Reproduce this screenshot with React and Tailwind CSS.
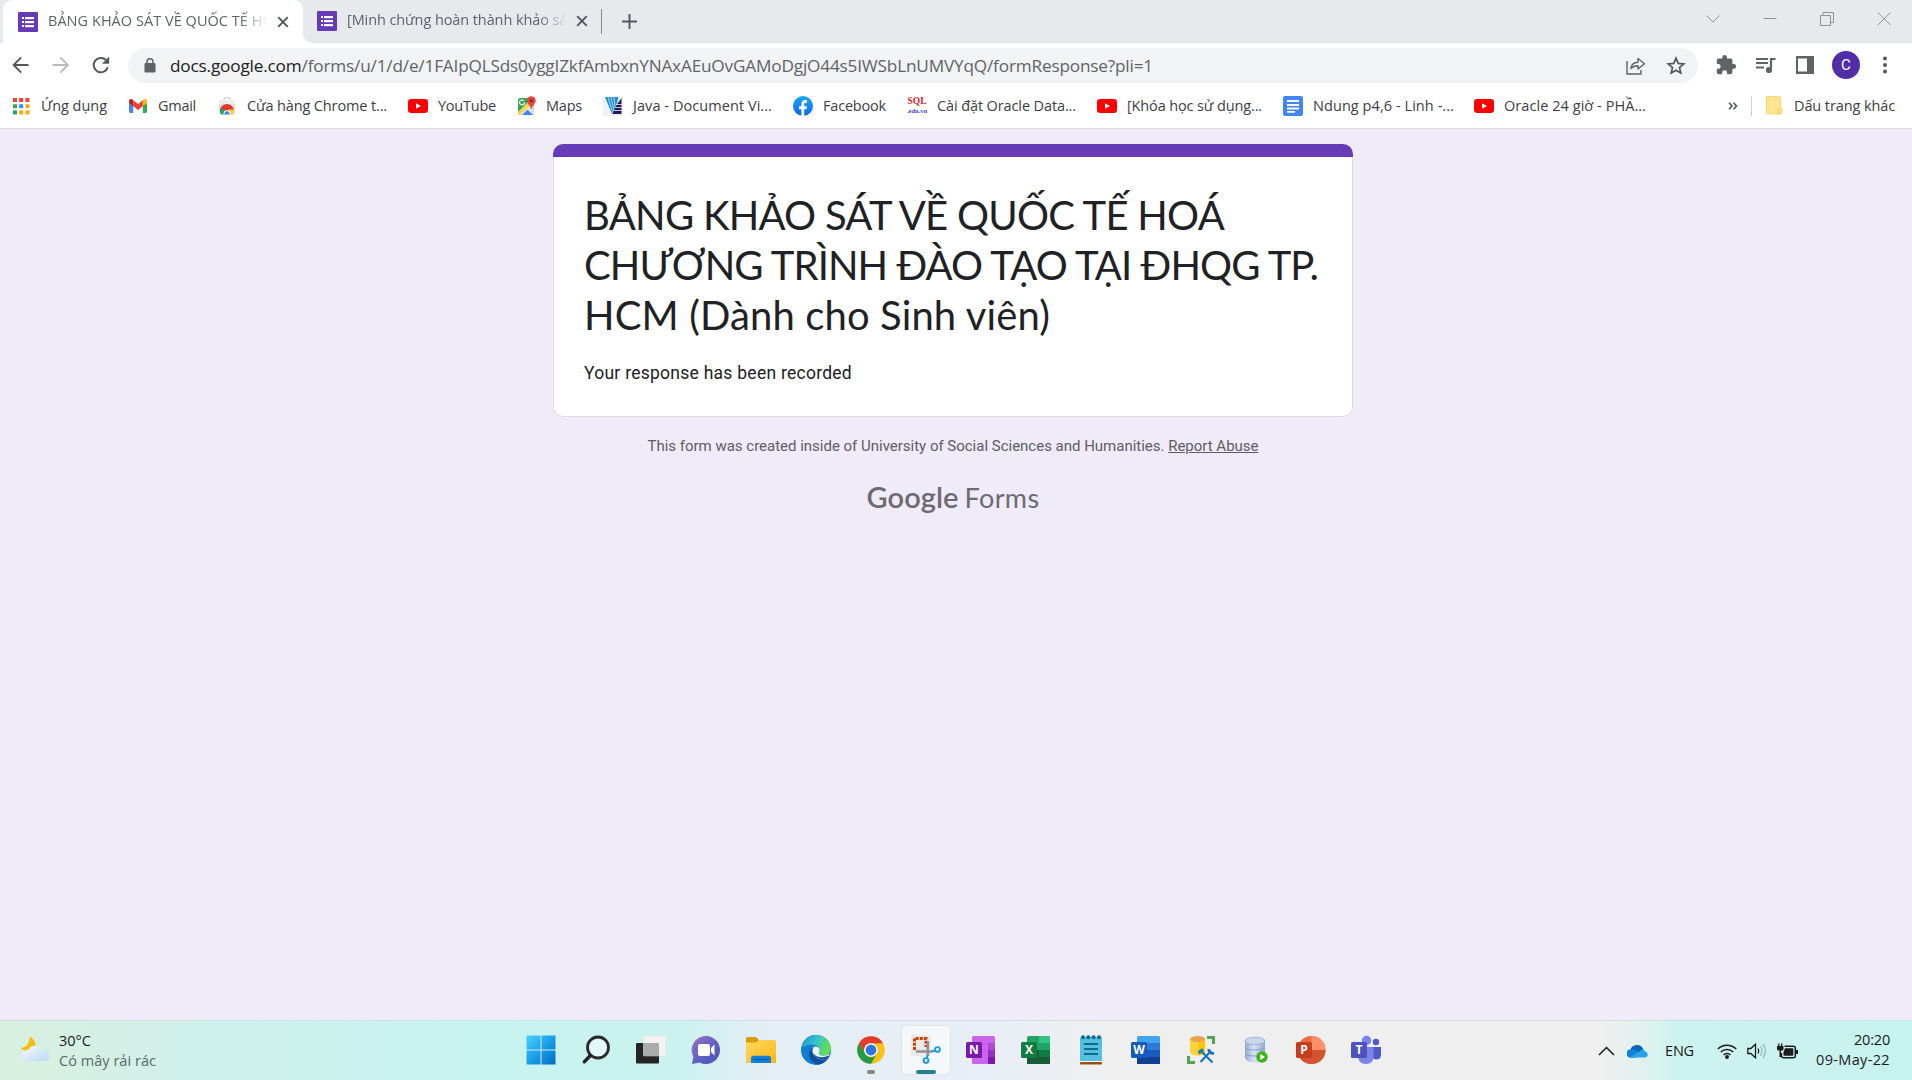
import React, { useLayoutEffect, useRef, useState } from "react";

/* Single line of text whose letter spacing is adjusted to fill a given width. */
function Fit({ w, children, className = "" }) {
  const ref = useRef(null);
  const [ls, setLs] = useState(0);
  useLayoutEffect(() => {
    const natural = ref.current.getBoundingClientRect().width;
    const n = ref.current.textContent.length;
    setLs((w - natural) / n);
  }, [w]);
  return (
    <span
      ref={ref}
      className={"inline-block whitespace-pre " + className}
      style={{ letterSpacing: ls + "px" }}
    >
      {children}
    </span>
  );
}

const ui = "font-['Open_Sans','Noto_Sans',sans-serif]";

/* ---------- small drawings ---------- */

const FormsIcon = () => (
  <svg width="20" height="20" viewBox="0 0 20 20" className="shrink-0">
    <rect width="20" height="20" rx="1" fill="#673ab7" />
    <g fill="#fff">
      <rect x="4" y="5" width="2" height="2" />
      <rect x="7" y="5" width="9" height="2.2" />
      <rect x="4" y="9" width="2" height="2" />
      <rect x="7" y="9" width="9" height="2.2" />
      <rect x="4" y="13" width="2" height="2" />
      <rect x="7" y="13" width="9" height="2.2" />
    </g>
  </svg>
);

const CloseX = () => (
  <svg width="12" height="12" viewBox="0 0 12 12" className="shrink-0">
    <path d="M1.2 1.2l9.6 9.6M10.8 1.2l-9.6 9.6" stroke="#54585c" strokeWidth="1.9" />
  </svg>
);

const AppsIcon = () => (
  <svg width="18" height="18" viewBox="0 0 18 18">
    {[
      "#ea4335", "#ea4335", "#ea4335",
      "#34a853", "#2a93f5", "#fbab00",
      "#22a464", "#fbab00", "#fbab00",
    ].map((c, i) => (
      <rect key={i} x={1 + (i % 3) * 6.2} y={1 + Math.floor(i / 3) * 6.2} width="4" height="4" fill={c} />
    ))}
  </svg>
);

const GmailIcon = () => (
  <svg width="18" height="14" viewBox="0 0 18 14">
    <path d="M0 2.2V12.6Q0 14 1.3 14H4.2V5z" fill="#4285f4" />
    <path d="M18 2.2V12.6Q18 14 16.700 14H13.800V5z" fill="#34a853" />
    <path d="M13.800 1.300V7.300L18 4.100V2.100C18 .2 15.900-.6 14.600.5z" fill="#fbbc04" />
    <path d="M4.200 7.300V1.300L9 4.900l4.800-3.600v6L9 10.900z" fill="#ea4335" />
    <path d="M0 2.100v2L4.200 7.300v-6L3.400.5C2.100-.6 0 .2 0 2.100z" fill="#c5221f" />
  </svg>
);

const StoreIcon = () => (
  <svg width="16" height="18" viewBox="0 0 16 18">
    <path d="M5 3V1.500Q5 .8 5.700.8h4.600Q11 .8 11 1.500V3" fill="none" stroke="#cfd2d5" strokeWidth="1.300" />
    <path d="M0 3h16v6H0z" fill="#eceef0" />
    <path d="M0 7h16v9q0 1.500-1.500 1.500h-13Q0 17.500 0 16z" fill="#dfe2e5" />
    <path d="M1 13.500a7 6.500 0 0 1 14 0l-7 .5z" fill="#e0392b" />
    <path d="M1.200 11.500Q.2 15 2.200 17.500H7L3.800 12z" fill="#1da261" />
    <path d="M9 12.500h5.900q.6 2.600-1.100 5H8z" fill="#ffce43" />
    <path d="M4.600 17.500a3.500 3.500 0 1 1 6.800 0z" fill="#fff" />
    <path d="M5.500 17.500a2.600 2.600 0 1 1 5 0z" fill="#3f86f5" />
  </svg>
);

const YouTubeIcon = () => (
  <svg width="20" height="14" viewBox="0 0 20 14">
    <rect width="20" height="14" rx="3.200" fill="#f00" />
    <path d="M8 4.200v5.600L13 7z" fill="#fff" />
  </svg>
);

const MapsIcon = () => (
  <svg width="20" height="20" viewBox="0 0 20 20">
    <rect x="2" y="2" width="16" height="17" rx="2" fill="#35a55a" />
    <path d="M2 18L17.500 3.500 18 17q0 2-2 2H4q-1.500 0-2-1z" fill="#dfe3e6" />
    <path d="M2 16L15 3l3 2L4 19q-2 0-2-2z" fill="#fdd34d" />
    <path d="M6 19l5.500-5.300L17 19z" fill="#4285f4" />
    <path d="M8.500 6.200a2.500 2.500 0 1 1-.8-1.600" fill="none" stroke="#fff" strokeWidth="1.200" />
    <path d="M15.300.2a4.400 4.400 0 0 0-4.400 4.400c0 3.300 3.300 4.300 4.400 9.200 1.100-4.900 4.400-5.900 4.400-9.200A4.400 4.400 0 0 0 15.300.2z" fill="#e5443a" />
    <circle cx="15.300" cy="4.700" r="1.600" fill="#8c2a22" />
  </svg>
);

const JavaDocIcon = () => (
  <svg width="20" height="20" viewBox="0 0 20 20">
    <rect width="20" height="20" fill="#f1f1f4" />
    <path d="M2 1h13.500L11 18H9z" fill="#1c8fce" />
    <path d="M5 1l5 17M8 1l3 14M11 1l1 10" stroke="#e9f5fb" strokeWidth=".7" />
    <path d="M18.500 2v16H9.500l4-9z" fill="#241a5c" />
    <path d="M13 8.500h6M12 11.500H19M11 14.500h8" stroke="#f1f1f4" strokeWidth=".8" />
  </svg>
);

const FacebookIcon = () => (
  <svg width="20" height="20" viewBox="0 0 20 20">
    <defs>
      <linearGradient id="fb" x1="0" y1="0" x2="0" y2="1">
        <stop offset="0" stopColor="#1aa9fb" />
        <stop offset="1" stopColor="#0866e4" />
      </linearGradient>
    </defs>
    <circle cx="10" cy="10" r="10" fill="url(#fb)" />
    <path d="M8.400 20v-6.800H6v-3h2.400V8c0-2.500 1.500-3.900 3.700-3.900.8 0 1.600.1 1.900.2v2.600h-1.300c-1.200 0-1.500.7-1.500 1.500v1.800H14l-.5 3h-2.300V20z" fill="#fff" />
  </svg>
);

const SqlIcon = () => (
  <span className="flex w-5 flex-col items-center font-['Liberation_Serif',serif] font-bold">
    <span className="text-[9.5px] leading-[10px] text-[#e0212b]">SQL</span>
    <span className="text-[6.500px] leading-[9px] text-[#4a47c9]">.edu.vn</span>
  </span>
);

const DocsIcon = () => (
  <svg width="20" height="20" viewBox="0 0 20 20">
    <rect width="20" height="20" rx="2" fill="#4285f4" />
    <path d="M4 5h12M4 9h12M4 12.500h12M4 15.800h8" stroke="#fff" strokeWidth="1.800" />
  </svg>
);

const Toolbar = {
  Back: () => (
    <svg width="18" height="18" viewBox="0 0 18 18">
      <path d="M16.500 9H2M9.200 1.300L1.600 9l7.600 7.700" fill="none" stroke="#54585c" strokeWidth="1.900" />
    </svg>
  ),
  Forward: () => (
    <svg width="18" height="18" viewBox="0 0 18 18">
      <path d="M.5 9h15M8.300 1.300L15.900 9l-7.600 7.700" fill="none" stroke="#b9bbbe" strokeWidth="1.900" />
    </svg>
  ),
  Reload: () => (
    <svg width="18" height="18" viewBox="0 0 18 18">
      <path d="M15.800 11.200A7.200 7.200 0 1 1 14 4" fill="none" stroke="#54585c" strokeWidth="2" />
      <path d="M17.200 .5v7.200H10z" fill="#54585c" />
    </svg>
  ),
  Lock: () => (
    <svg width="12" height="15" viewBox="0 0 12 15">
      <rect x=".5" y="5" width="11" height="9.500" rx="1.200" fill="#5f6368" />
      <path d="M3 6V3.800a3 3 0 0 1 6 0V6" fill="none" stroke="#5f6368" strokeWidth="1.500" />
    </svg>
  ),
  Share: () => (
    <svg width="20" height="18" viewBox="0 0 20 18" fill="none" stroke="#5f6368" strokeWidth="1.400">
      <path d="M1 4v13h14v-4" />
      <path d="M4.800 11.500c.6-3.800 3.200-6 7.200-6.200V1.500L18.500 6.700 12 12V8.700c-3.200 0-5.400.8-7.200 2.800z" strokeLinejoin="round" />
    </svg>
  ),
  Star: () => (
    <svg width="20" height="19" viewBox="0 0 20 19">
      <path d="M10 2.200l2.200 5.200 5.600.5-4.300 3.700 1.300 5.500L10 14.200l-4.800 2.900 1.300-5.500L2.200 7.900l5.600-.5z" fill="none" stroke="#54585c" strokeWidth="1.700" />
    </svg>
  ),
  Puzzle: () => (
    <svg width="22" height="22" viewBox="0 0 24 24">
      <path d="M20.500 11H19V7c0-1.100-.9-2-2-2h-4V3.500a2.500 2.500 0 0 0-5 0V5H4c-1.100 0-2 .9-2 2v3.800h1.500a2.700 2.700 0 0 1 0 5.400H2V20c0 1.100.9 2 2 2h3.800v-1.500a2.700 2.700 0 0 1 5.400 0V22H17c1.100 0 2-.9 2-2v-4h1.500a2.500 2.500 0 0 0 0-5z" fill="#5f6368" />
    </svg>
  ),
  Queue: () => (
    <svg width="20" height="17" viewBox="0 0 20 17">
      <path d="M0 2h12M0 6h12M0 10.500h8" stroke="#5f6368" strokeWidth="1.900" />
      <path d="M15 12.500V2h4.500" fill="none" stroke="#5f6368" strokeWidth="2.200" />
      <circle cx="13" cy="13" r="3.100" fill="#5f6368" />
    </svg>
  ),
  Panel: () => (
    <svg width="18" height="18" viewBox="0 0 18 18">
      <path d="M0 0h18v18H0zM2 2.500v13h9v-13z" fillRule="evenodd" fill="#5f6368" />
    </svg>
  ),
};

/* ---------- browser chrome ---------- */

const Tab = ({ title, w, active }) => (
  <div className={"flex h-full items-center " + (active ? "w-[300px] rounded-t-[9px] bg-white pl-[15px]" : "w-[289px] pl-[5px]")}>
    <FormsIcon />
    <div className="ml-[10px] w-[219px] overflow-hidden [mask-image:linear-gradient(to_right,black_192px,transparent_219px)]">
      <Fit w={w} className="align-top text-[14.500px] text-[#5f6368]">{title}</Fit>
    </div>
    <div className="ml-[10px]">
      <CloseX />
    </div>
  </div>
);

const TabStrip = () => (
  <div className="flex h-[43px] bg-[#e6eaed] pl-[3px]">
    <Tab title="BẢNG KHẢO SÁT VỀ QUỐC TẾ HOÁ" w={235} active />
    <div className="h-full w-[9px] bg-white">
      <div className="h-full rounded-bl-[9px] bg-[#e6eaed]" />
    </div>
    <div className="h-[42px]">
      <Tab title="[Minh chứng hoàn thành khảo sát]" w={230} />
    </div>
    <div className="mt-[9px] h-[25px] w-px bg-[#888c90]" />
    <svg width="15" height="15" viewBox="0 0 15 15" className="ml-[20px] mt-[14px]">
      <path d="M7.500 0v15M0 7.500h15" stroke="#54585c" strokeWidth="1.900" />
    </svg>
    <div className="ml-auto flex gap-[43px] pr-[21px] pt-[12px]">
      {[
        "M.5 3.500l6.500 6.500 6.500-6.500",
        "M.5 6.500h13",
        "M.5 3.500h10v10h-10zM3 3V.5h10.500v10H11",
        "M1 .5l12.500 12.500M13.500 .5L1 13",
      ].map((d, i) => (
        <svg key={i} width="14" height="14" viewBox="0 0 14 14">
          <path d={d} fill="none" stroke="#909396" strokeWidth="1" />
        </svg>
      ))}
    </div>
  </div>
);

const AddressRow = () => (
  <div className="flex h-[44px] items-center bg-white pl-[12px]">
    <Toolbar.Back />
    <div className="ml-[22px]"><Toolbar.Forward /></div>
    <div className="ml-[22px]"><Toolbar.Reload /></div>
    <div className={"ml-[18px] flex h-[35px] w-[1570px] items-center rounded-full bg-[#f1f3f4] pl-[16px] pt-[1px] text-[17.200px] leading-[34px] text-[#5f6368] " + ui}>
      <Toolbar.Lock />
      <Fit w={983} className="ml-[14px]"><span className="text-[#202124]">docs.google.com</span>/forms/u/1/d/e/1FAIpQLSds0yggIZkfAmbxnYNAxAEuOvGAMoDgjO44s5IWSbLnUMVYqQ/formResponse?pli=1</Fit>
      <div className="ml-auto flex items-center gap-[20px] pr-[12px]">
        <Toolbar.Share />
        <Toolbar.Star />
      </div>
    </div>
    <div className="ml-[17px]"><Toolbar.Puzzle /></div>
    <div className="ml-[19px]"><Toolbar.Queue /></div>
    <div className="ml-[20px]"><Toolbar.Panel /></div>
    <div className="ml-[18px] flex h-7 w-7 items-center justify-center rounded-full bg-[#512da8] font-[Roboto,sans-serif] text-[15px] text-white">C</div>
    <svg width="6" height="18" viewBox="0 0 6 18" className="ml-[22px]">
      <circle cx="3" cy="2.500" r="2" fill="#54585c" />
      <circle cx="3" cy="9" r="2" fill="#54585c" />
      <circle cx="3" cy="15.500" r="2" fill="#54585c" />
    </svg>
  </div>
);

const bookmarks = [
  [AppsIcon, "Ứng dụng", 117, 66],
  [GmailIcon, "Gmail", 89, 38],
  [StoreIcon, "Cửa hàng Chrome t...", 191, 140],
  [YouTubeIcon, "YouTube", 108, 58],
  [MapsIcon, "Maps", 87, 36],
  [JavaDocIcon, "Java - Document Vi...", 190, 139],
  [FacebookIcon, "Facebook", 114, 63],
  [SqlIcon, "Cài đặt Oracle Data...", 190, 139],
  [YouTubeIcon, "[Khóa học sử dụng...", 186, 135],
  [DocsIcon, "Ndung p4,6 - Linh -...", 191, 141],
  [YouTubeIcon, "Oracle 24 giờ - PHẦ...", 250, 142],
];

const BookmarksBar = () => (
  <div className={"flex h-[42px] items-center border-b border-[#dadce0] bg-white pb-[4px] pl-[11px] text-[14.500px] text-[#3c4043] " + ui}>
    {bookmarks.map(([Icon, label, slot, w], i) => (
      <div key={i} className="flex shrink-0 items-center" style={{ width: slot }}>
        <span className="flex w-5 shrink-0 justify-center"><Icon /></span>
        <Fit w={w} className="ml-[10px]">{label}</Fit>
      </div>
    ))}
    <svg width="10" height="8" viewBox="0 0 10 8" className="ml-[4px]">
      <path d="M1 .7L4 4 1 7.300M5.500 .7L8.500 4l-3 3.300" fill="none" stroke="#54585c" strokeWidth="1.700" />
    </svg>
    <div className="ml-[13px] h-5 w-px bg-[#cbcdd0]" />
    <svg width="17" height="19" viewBox="0 0 17 19" className="ml-[14px]">
      <rect x=".5" y=".5" width="14" height="17.500" rx="1.500" fill="#ffe591" stroke="#fbd766" />
      <path d="M12 18v-4.500q0-1.500 1.500-1.500h1q1.500 0 1.500 1.500V16q0 2-2 2z" fill="#ffe07c" stroke="#f4cb52" strokeWidth=".8" />
    </svg>
    <Fit w={101} className="ml-[11px]">Dấu trang khác</Fit>
  </div>
);

/* ---------- form page ---------- */

const FormPage = () => (
  <main className="flex h-[891px] flex-col items-center bg-[#f0ebf8] pr-[6px] pt-[15px]">
    <section className="flex h-[273px] w-[800px] flex-col overflow-hidden rounded-[10px]">
      <div className="h-[13px] shrink-0 bg-[#673ab7]" />
      <div className="grow rounded-b-[10px] border border-t-0 border-[#dadce0] bg-white pl-[30px] pt-[33px]">
        <h1 className="flex flex-col items-start font-[Lato,sans-serif] text-[40px] leading-[50px] text-[#202124]">
          <Fit w={640}>BẢNG KHẢO SÁT VỀ QUỐC TẾ HOÁ</Fit>
          <Fit w={734}>CHƯƠNG TRÌNH ĐÀO TẠO TẠI ĐHQG TP.</Fit>
          <Fit w={466}>HCM (Dành cho Sinh viên)</Fit>
        </h1>
        <p className="mt-[21px] font-[Roboto,sans-serif] text-[17.500px] leading-[25px] text-[#202124]">
          <Fit w={268}>Your response has been recorded</Fit>
        </p>
      </div>
    </section>
    <p className="mt-[17px] font-[Roboto,sans-serif] text-[15px] leading-[24px] text-[#5f5c63]">
      <Fit w={611}>This form was created inside of University of Social Sciences and Humanities. <span className="underline">Report Abuse</span></Fit>
    </p>
    <div className="mt-[19px] flex gap-[6px] text-[#6d6a71]">
      <Fit w={92} className="font-[Lato,sans-serif] text-[29px] leading-[40px] font-semibold">Google</Fit>
      <Fit w={75} className="font-[Lato,sans-serif] text-[27px] leading-[41px]">Forms</Fit>
    </div>
  </main>
);

/* ---------- taskbar ---------- */

const Office = ({ letter, dark, children }) => (
  <svg width="30" height="30" viewBox="0 0 30 30">
    {children}
    <rect y="7" width="16" height="16" rx="1.500" fill={dark} />
    <text x="8" y="19.300" textAnchor="middle" fill="#fff" fontSize="12" fontWeight="700" fontFamily="Open Sans, sans-serif">{letter}</text>
  </svg>
);

const taskIcons = [
  () => (
    <svg width="30" height="30" viewBox="0 0 30 30">
      <defs>
        <linearGradient id="win" x1="0" y1="0" x2="1" y2="1">
          <stop offset="0" stopColor="#4fd0ff" />
          <stop offset=".5" stopColor="#1a9fe8" />
          <stop offset="1" stopColor="#0469c8" />
        </linearGradient>
      </defs>
      <path d="M.5 .5h14v14H.5zM15.500 .5h14v14h-14zM.5 15.500h14v14H.5zM15.500 15.500h14v14h-14z" fill="url(#win)" />
    </svg>
  ),
  () => (
    <svg width="30" height="30" viewBox="0 0 30 30">
      <circle cx="17" cy="12.500" r="10.500" fill="#f5fcfc" fillOpacity=".6" stroke="#2a2a2c" strokeWidth="2.800" />
      <path d="M9.300 20.500L3.300 26.800" stroke="#222" strokeWidth="3.400" strokeLinecap="round" />
    </svg>
  ),
  () => (
    <svg width="30" height="30" viewBox="0 0 30 30">
      <rect x="0" y="8" width="23" height="20.500" rx="1" fill="#252525" />
      <rect x="7.500" y="1" width="22.500" height="20" rx="1" fill="#f2f2f2" stroke="#dcdcdc" strokeWidth=".5" />
      <rect x="7.500" y="8" width="15.500" height="13" fill="#aaabab" />
    </svg>
  ),
  () => (
    <svg width="30" height="30" viewBox="0 0 30 30">
      <defs>
        <linearGradient id="chat" x1="0" y1="0" x2="1" y2="1">
          <stop offset="0" stopColor="#9b71b8" />
          <stop offset=".6" stopColor="#5b5fc7" />
          <stop offset="1" stopColor="#4f52b2" />
        </linearGradient>
      </defs>
      <path d="M15 1a14 14 0 1 1-6.500 26.400L1 29l1.300-7.400A14 14 0 0 1 15 1z" fill="url(#chat)" />
      <rect x="7" y="9" width="12" height="12" rx="2" fill="#fff" />
      <path d="M20 13l3.500-3.500v11L20 17z" fill="#fff" />
    </svg>
  ),
  () => (
    <svg width="30" height="30" viewBox="0 0 30 30">
      <defs>
        <linearGradient id="fold" x1="0" y1="0" x2="1" y2="1">
          <stop offset="0" stopColor="#ffd869" />
          <stop offset="1" stopColor="#f9b90f" />
        </linearGradient>
      </defs>
      <path d="M0 3.500Q0 2 1.500 2H9q1.500 0 2.500 1.500L13 5v6H0z" fill="#dd9b08" />
      <path d="M0 7.500h10.500L13 5h15.500Q30 5 30 6.500V28H0z" fill="url(#fold)" />
      <path d="M5 28v-5q0-2.300 2.300-2.300h15.400q2.300 0 2.300 2.300v5z" fill="#1180d5" />
      <path d="M8.500 24.500h13" stroke="#0b5ba6" strokeWidth="1.300" />
    </svg>
  ),
  () => (
    <svg width="30" height="30" viewBox="0 0 30 30">
      <defs>
        <linearGradient id="edgeTop" x1="0" y1="0" x2="1" y2=".4">
          <stop offset="0" stopColor="#1c8fd8" />
          <stop offset=".5" stopColor="#35c1d0" />
          <stop offset="1" stopColor="#62df54" />
        </linearGradient>
      </defs>
      <circle cx="15" cy="15" r="15" fill="#0f7ed3" />
      <path d="M.3 13C1.500 4.500 8 0 15 0c9 0 15 6.500 15 13 0 5-3.500 7.700-7.500 7.700-3.500 0-5-1.200-4.800-2.300.1-.7 1-1.200 1-3.100 0-3-3-5.800-7.500-5.800C6 9.500 1.500 12 .3 13z" fill="url(#edgeTop)" />
      <path d="M12 12.500c-3.600 2.500-4.600 6-3.500 9.500 1.300 4.200 5 7 9 7.700 4.500-1 8-3.700 10-7-2.500 1.500-5 1.900-7.500 1.500-5-.8-8.500-4.500-8.500-8 0-1.400.2-2.600.5-3.700z" fill="#12509b" />
      <path d="M12.200 12.400c1.700-1.700 6.500-.6 6.500 2.900 0 1.900-.9 2.400-1 3.100-.2 1.200 1.300 2.300 4.800 2.300 2.300 0 4-.6 5.200-1.600l1.200 1-1.400 2.600c-2.500 1.500-5 1.900-7.500 1.500-5-.8-8.500-4.500-8.500-8 0-1.400.2-2.600.7-3.800z" fill="#eaf1f7" />
      <path d="M28.900 20.100l-1.400 2.600c-2.500 1.500-5 1.900-7.500 1.500-4-.7-7.300-3.400-8.200-6.200 2.200 3 6.200 4.600 10.200 4.200 3-.3 5-1 6.900-2.100z" fill="#12509b" />
    </svg>
  ),
  () => (
    <svg width="28" height="28" viewBox="0 0 28 28">
      <circle cx="14" cy="14" r="13.800" fill="#fbc116" />
      <path d="M2 7.200A13.800 13.800 0 0 1 26 7.200H14a6.800 6.800 0 0 0-6 10.200z" fill="#e33b2e" />
      <path d="M2 7.200a13.800 13.800 0 0 0 12 20.600l6-10.400a6.800 6.800 0 0 1-12 0z" fill="#219a4b" />
      <circle cx="14" cy="14" r="6.800" fill="#fff" />
      <circle cx="14" cy="14" r="5.400" fill="#2b76ea" />
    </svg>
  ),
  () => (
    <svg width="30" height="30" viewBox="0 0 30 30">
      <rect width="21" height="21" rx="2" fill="#e9e9ea" x="-1" y="0" />
      <path d="M3.500 15V3.500H15V12" fill="none" stroke="#d83b01" strokeWidth="3" strokeDasharray="3 1.200" />
      <path d="M16.800 6v15M5 16.500h16" stroke="#8b9197" strokeWidth="2.600" />
      <circle cx="15" cy="25.500" r="2.400" fill="none" stroke="#1a9be6" strokeWidth="1.900" />
      <circle cx="26.500" cy="14.500" r="2.400" fill="none" stroke="#1a9be6" strokeWidth="1.900" />
      <path d="M20.500 16.500l4-1M16.500 20.500l-1 3" stroke="#1a9be6" strokeWidth="2" />
    </svg>
  ),
  () => (
    <Office letter="N" dark="#7719aa">
      <rect x="6" y="1" width="23" height="28" rx="1.500" fill="#ca64ea" />
      <path d="M22 8h7v7h-7z" fill="#ae4bd5" />
      <path d="M22 15h7v7h-7z" fill="#9332bf" />
      <path d="M22 22h7v7h-7z" fill="#7719aa" />
    </Office>
  ),
  () => (
    <Office letter="X" dark="#107c41">
      <rect x="6" y="1" width="23" height="28" rx="1.500" fill="#21a366" />
      <path d="M18 1h11v7H18z" fill="#33c481" />
      <path d="M6 15h12v7H6z" fill="#185c37" />
      <path d="M18 15h11v7H18z" fill="#107c41" />
      <path d="M6 22h23v7H6z" fill="#185c37" />
    </Office>
  ),
  () => (
    <svg width="24" height="30" viewBox="0 0 24 30">
      <rect x="1" y="2" width="22" height="25" rx="1.500" fill="#56bfdd" />
      <rect x="1" y="27" width="22" height="2.500" rx="1" fill="#9a4e10" />
      <path d="M1 26.500h22" stroke="#fff" strokeWidth="1" />
      {[4, 9.300, 14.600, 20].map((x) => <circle key={x} cx={x} cy="2.200" r="2" fill="#0c6a8e" />)}
      <path d="M5 9h14M5 14h14M5 19h14" stroke="#0c6a8e" strokeWidth="2" />
    </svg>
  ),
  () => (
    <Office letter="W" dark="#185abd">
      <rect x="6" y="1" width="23" height="28" rx="1.500" fill="#41a5ee" />
      <path d="M6 8h23v7H6z" fill="#2b7cd3" />
      <path d="M6 15h23v7H6z" fill="#185abd" />
      <path d="M6 22h23v7H6z" fill="#103f91" />
    </Office>
  ),
  () => (
    <svg width="30" height="30" viewBox="0 0 30 30">
      <path d="M4 3.500v14q2 3 7.500 3t7.500-3v-14z" fill="#fdd33b" />
      <path d="M12 3.500v17q5 0 7-3v-14z" fill="#fbc800" />
      <ellipse cx="11.500" cy="4" rx="7.500" ry="3" fill="#eaa24b" />
      <path d="M21 2.500h6.500V9M2.500 21v6.500H9" fill="none" stroke="#54a350" strokeWidth="3" />
      <path d="M14.500 27L25 16M16 17l10.500 10.500" stroke="#1677c5" strokeWidth="2.200" />
      <path d="M12.500 18l4.500-3.500M23 14q-1 4 5 4.500" fill="none" stroke="#1677c5" strokeWidth="3" />
    </svg>
  ),
  () => (
    <svg width="24" height="28" viewBox="0 0 24 28">
      <defs>
        <linearGradient id="cyl" x1="0" y1="0" x2="1" y2="0">
          <stop offset="0" stopColor="#90a9cf" />
          <stop offset=".45" stopColor="#d8e4f4" />
          <stop offset="1" stopColor="#8da8cf" />
        </linearGradient>
      </defs>
      <path d="M1 5v17q2 4.500 10 4.500T21 22V5z" fill="url(#cyl)" />
      <path d="M1 11q2 3 10 3t10-3M1 17q2 3 10 3t10-3" fill="none" stroke="#84a0c8" />
      <ellipse cx="11" cy="5" rx="10" ry="3.800" fill="#c8d6ea" stroke="#91a9cd" strokeWidth=".8" />
      <circle cx="18" cy="21" r="5.700" fill="#3cb31b" />
      <path d="M16.300 18v6l4.700-3z" fill="#fff" />
    </svg>
  ),
  () => (
    <Office letter="P" dark="#c43e1c">
      <circle cx="15.500" cy="15" r="14" fill="#ed6c47" />
      <path d="M15.500 1a14 14 0 0 1 14 14h-14z" fill="#ff8f6b" />
      <path d="M1.500 15h28a14 14 0 0 1-28 0z" fill="#d35230" />
    </Office>
  ),
  () => (
    <Office letter="T" dark="#4b53bc">
      <circle cx="25" cy="7" r="3.200" fill="#5059c9" />
      <path d="M19 12h11v8q0 4.500-5.500 4.500L19 22z" fill="#5059c9" />
      <circle cx="15.500" cy="5.500" r="4.700" fill="#7b83eb" />
      <path d="M7 12h15.500v9q0 8-7.500 8t-8-8z" fill="#7b83eb" />
    </Office>
  ),
];

const SunCloud = () => (
  <svg width="30" height="28" viewBox="0 0 30 28" className="shrink-0">
    <defs>
      <linearGradient id="cloud" x1="0" y1="0" x2="1" y2="1">
        <stop offset="0" stopColor="#f5f9fd" />
        <stop offset="1" stopColor="#b9d9f5" />
      </linearGradient>
    </defs>
    <path d="M10.800 1.500c5.500 3.500 6.700 8 4.700 11.500-2.500 4.300-9 5-14-.2 5 .5 9.300-4.300 9.300-11.300z" fill="#fbbb0c" />
    <path d="M8.500 26a5.500 5.500 0 1 1 .5-11 7.500 7.500 0 0 1 13.500 0 5.800 5.800 0 1 1 2 11z" fill="url(#cloud)" />
  </svg>
);

const Taskbar = () => (
  <footer className={"flex h-[60px] border-t border-[#cfe0e2] bg-[linear-gradient(90deg,#d8f0e0_0px,#cff0ec_220px,#c7f3ef_480px,#cbf2ef_680px,#e5eef4_770px,#e7eef7_960px,#efefef_1120px,#efefef_1600px,#e0f1ee_1645px,#cdf3f1_1675px,#cbf1ef_1800px,#c5f3ee_1912px)] " + ui}>
    <div className="flex w-[513px] pl-[19px] pt-[14px]">
      <SunCloud />
      <div className="-mt-[4px] ml-[10px] flex flex-col items-start text-[14.500px] leading-[20px]">
        <Fit w={32} className="text-[#1b1b1b]">30°C</Fit>
        <Fit w={97} className="text-[#5a6867]">Có mây rải rác</Fit>
      </div>
    </div>
    <div className="flex">
      {taskIcons.map((Icon, i) => (
        <div key={i} className="flex w-[55px] flex-col items-center pt-[5px]">
          <div className={"flex h-[48px] w-[48px] flex-col items-center rounded-[5px] pt-[9px] " + (i === 7 ? "bg-[#f5f8fa] shadow-[0_0_1px_1px_#e0e5ea]" : "")}>
            <div className="flex h-[30px] items-center"><Icon /></div>
            {i === 6 && <div className="mt-[5px] h-[4px] w-[8px] rounded-full bg-[#868686]" />}
            {i === 7 && <div className="mt-[5px] h-[4px] w-[20px] rounded-full bg-[#24808f]" />}
          </div>
        </div>
      ))}
    </div>
    <div className="ml-auto flex items-center pr-[22px] text-[14.500px] text-[#1b1b1b]">
      <svg width="17" height="10" viewBox="0 0 17 10">
        <path d="M1 9l7.500-7.500L16 9" fill="none" stroke="#1b1b1b" strokeWidth="1.500" />
      </svg>
      <svg width="21" height="14" viewBox="0 0 21 14" className="ml-[12px]">
        <path d="M4 13.500a4 4 0 0 1-.5-8A7 7 0 0 1 16 4.500l1 4-8 5z" fill="#0a65bd" />
        <path d="M3.500 5.500a5 5 0 0 1 5 .5l8 4-11 3.500H4a4 4 0 0 1-.5-8z" fill="#1283d8" />
        <path d="M3 13l9.500-5.500Q15 4.500 18 7q2.700 1 2.700 3.500 0 3-3.200 3H4z" fill="#28a3ea" />
      </svg>
      <Fit w={29} className="ml-[17px]">ENG</Fit>
      <svg width="20" height="16" viewBox="0 0 20 16" className="ml-[23px]" fill="none" stroke="#1b1b1b" strokeWidth="1.500">
        <path d="M.8 6a13 13 0 0 1 18.400 0M3.800 9a8.800 8.800 0 0 1 12.400 0M6.600 11.900a4.800 4.800 0 0 1 6.800 0" />
        <circle cx="10" cy="14" r="1.200" fill="#1b1b1b" />
      </svg>
      <svg width="20" height="16" viewBox="0 0 20 16" className="ml-[10px]" fill="none" stroke="#1b1b1b" strokeWidth="1.300">
        <path d="M.8 5.500h3L8.500 1.200v13.600L3.800 10.500h-3z" />
        <path d="M11 5.500q1.600 2.500 0 5" />
        <path d="M13.500 3.200q3 4.800 0 9.600M16 1q5 7 0 14" stroke="#9cbcbb" />
      </svg>
      <svg width="21" height="16" viewBox="0 0 21 16" className="ml-[10px]">
        <path d="M7.500 3.300h8.800q2 0 2 2v7.400q0 2-2 2H6.500q-2 0-2-2V10" fill="none" stroke="#1b1b1b" strokeWidth="1.500" />
        <path d="M8 5.300h7.300q1 0 1 1v5.400q0 1-1 1H7.500q-1 0-1-1V9z" fill="#1b1b1b" />
        <path d="M19 7h2v4h-2zM0 3h1.200V.5h1.300V3h1.500V.5h1.300V3h1.200v3q0 1.500-1.500 1.500h-1V14H2.500V7.500h-1Q0 7.500 0 6z" fill="#1b1b1b" />
      </svg>
      <div className="ml-[18px] flex flex-col items-end pb-[1px] leading-[20px]">
        <Fit w={36}>20:20</Fit>
        <Fit w={74}>09-May-22</Fit>
      </div>
    </div>
  </footer>
);

export default function App() {
  return (
    <div className={"flex h-[1080px] w-[1912px] flex-col overflow-hidden bg-white " + ui}>
      <TabStrip />
      <AddressRow />
      <BookmarksBar />
      <FormPage />
      <Taskbar />
    </div>
  );
}
